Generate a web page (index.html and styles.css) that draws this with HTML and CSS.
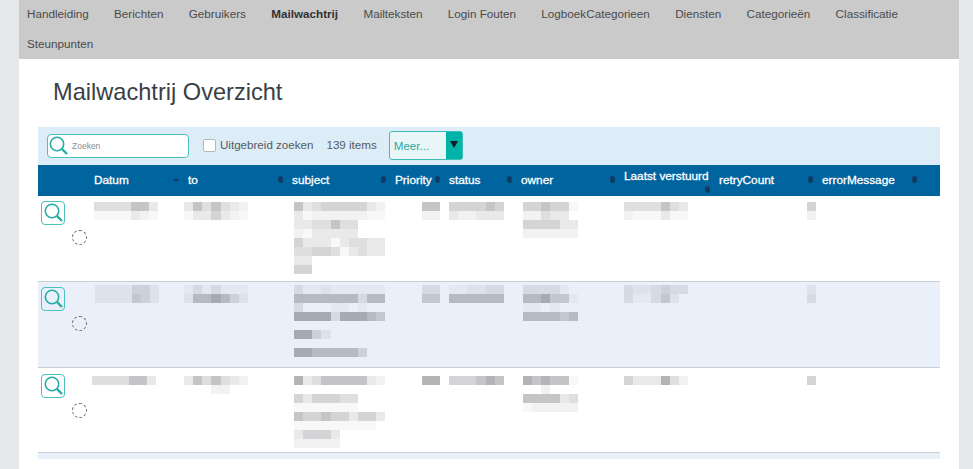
FILE: index.html
```html
<!DOCTYPE html>
<html lang="nl">
<head>
  <meta charset="UTF-8" />
  <meta name="viewport" content="width=device-width, initial-scale=1" />
  <title>Mailwachtrij Overzicht</title>
  <link rel="stylesheet" href="styles.css">
</head>
<body>
  <div class="page">
    <nav class="topnav">
      <a href="#">Handleiding</a>
      <a href="#">Berichten</a>
      <a href="#">Gebruikers</a>
      <a href="#" class="active">Mailwachtrij</a>
      <a href="#">Mailteksten</a>
      <a href="#">Login Fouten</a>
      <a href="#">LogboekCategorieen</a>
      <a href="#">Diensten</a>
      <a href="#">Categorieën</a>
      <a href="#">Classificatie</a>
      <a href="#">Steunpunten</a>
    </nav>

    <h1 class="title">Mailwachtrij Overzicht</h1>

    <section class="overview">
      <div class="toolbar">
        <div class="search">
          <svg class="loupe" viewBox="0 0 20 20"><circle cx="8" cy="8" r="6.7"/><line class="grip" x1="12.9" y1="12.9" x2="18" y2="18"/></svg>
          <input type="text" placeholder="Zoeken">
        </div>
        <label class="extended"><input type="checkbox"> Uitgebreid zoeken</label>
        <span class="count">139 items</span>
        <div class="more"><span>Meer...</span><b class="more-btn"><s></s></b></div>
      </div>

      <table class="grid">
        <colgroup>
          <col class="c-act"><col class="c-datum"><col class="c-to"><col class="c-subject"><col class="c-prio">
          <col class="c-status"><col class="c-owner"><col class="c-last"><col class="c-retry"><col class="c-error">
        </colgroup>
        <thead>
          <tr>
            <th></th>
            <th><div class="th">Datum<span class="sort desc"></span></div></th>
            <th><div class="th">to<span class="sort"></span></div></th>
            <th><div class="th">subject<span class="sort"></span></div></th>
            <th><div class="th">Priority<span class="sort"></span></div></th>
            <th><div class="th">status<span class="sort"></span></div></th>
            <th><div class="th">owner<span class="sort"></span></div></th>
            <th><div class="th wrap">Laatst verstuurd<span class="sort"></span></div></th>
            <th><div class="th">retryCount<span class="sort"></span></div></th>
            <th><div class="th last">errorMessage<span class="sort"></span></div></th>
          </tr>
        </thead>
        <tbody>
          <!-- contents of the rows are pixelated in the original -->
          <tr class="row r1">
            <td class="act">
              <button class="view"><svg class="loupe" viewBox="0 0 20 20"><circle cx="8" cy="8" r="6.7"/><line class="grip" x1="12.9" y1="12.9" x2="18" y2="18"/></svg></button>
              <span class="busy"></span>
            </td>
            <td><div class="mos">
              <p><i class="d"></i><i class="d"></i><i class="d"></i><i class="d"></i><i class="f"></i><i class="f"></i><i class="c"></i></p>
              <p><i class="a"></i><i class="a"></i><i class="a"></i><i class="a"></i><i class="c"></i><i class="b"></i><i class="a"></i></p>
            </div></td>
            <td><div class="mos m-to">
              <p><i class="c"></i><i class="f"></i><i class="d"></i><i class="f"></i><i class="d"></i><i class="c"></i><i class="b"></i></p>
              <p><i class="a"></i><i class="c"></i><i class="c"></i><i class="e"></i><i class="c"></i><i class="b"></i><i class="a"></i></p>
            </div></td>
            <td><div class="mos m-subject">
              <p><i class="f"></i><i class="c"></i><i class="d"></i><i class="e"></i><i class="e"></i><i class="e"></i><i class="e"></i><i class="e"></i><i class="c"></i><i class="b"></i></p>
              <p><i class="c"></i><i class="a"></i><i class="b"></i><i class="b"></i><i class="b"></i><i class="b"></i><i class="b"></i><i class="b"></i><i class="a"></i><i class="a"></i></p>
              <p><i class="c"></i><i class="c"></i><i class="d"></i><i class="d"></i><i class="f"></i><i class="d"></i><i class="d"></i></p>
              <p><i class="b"></i><i class="a"></i><i class="c"></i><i class="c"></i><i class="c"></i><i class="c"></i><i class="c"></i></p>
              <p><i class="e"></i><i class="c"></i><i class="c"></i><i class="c"></i><i class="a"></i><i class="c"></i><i class="d"></i><i class="d"></i><i class="c"></i><i class="c"></i></p>
              <p><i class="d"></i><i class="d"></i><i class="e"></i><i class="e"></i><i class="d"></i><i class="a"></i><i class="c"></i><i class="d"></i><i class="c"></i><i class="c"></i></p>
              <p><i class="c"></i><i class="c"></i></p>
              <p><i class="e"></i><i class="e"></i></p>
            </div></td>
            <td><div class="mos m-prio">
              <p><i class="f"></i><i class="f"></i></p>
              <p><i class="b"></i><i class="b"></i></p>
            </div></td>
            <td><div class="mos m-col">
              <p><i class="e"></i><i class="e"></i><i class="e"></i><i class="e"></i><i class="f"></i><i class="e"></i></p>
              <p><i class="c"></i><i class="b"></i><i class="b"></i><i class="c"></i><i class="c"></i><i class="c"></i></p>
            </div></td>
            <td><div class="mos m-subject">
              <p><i class="e"></i><i class="e"></i><i class="f"></i><i class="e"></i><i class="e"></i><i class="a"></i></p>
              <p><i class="b"></i><i class="b"></i><i class="d"></i><i class="c"></i><i class="c"></i></p>
              <p><i class="e"></i><i class="e"></i><i class="e"></i><i class="e"></i><i class="c"></i><i class="c"></i></p>
              <p><i class="b"></i><i class="b"></i><i class="b"></i><i class="b"></i><i class="b"></i><i class="b"></i></p>
            </div></td>
            <td><div class="mos m-col">
              <p><i class="d"></i><i class="d"></i><i class="d"></i><i class="d"></i><i class="f"></i><i class="d"></i><i class="c"></i></p>
              <p><i class="b"></i><i class="a"></i><i class="a"></i><i class="a"></i><i class="c"></i><i class="a"></i><i class="a"></i></p>
            </div></td>
            <td><div class="mos m-err">
              <p><i class="e"></i></p>
              <p><i class="b"></i></p>
            </div></td>
            <td></td>
          </tr>
          <tr class="row r2 alt">
            <td class="act">
              <button class="view"><svg class="loupe" viewBox="0 0 20 20"><circle cx="8" cy="8" r="6.7"/><line class="grip" x1="12.9" y1="12.9" x2="18" y2="18"/></svg></button>
              <span class="busy"></span>
            </td>
            <td><div class="mos m-date2">
              <p><i class="b"></i><i class="b"></i><i class="b"></i><i class="b"></i><i class="d"></i><i class="d"></i><i class="b"></i></p>
              <p><i class="b"></i><i class="b"></i><i class="b"></i><i class="b"></i><i class="e"></i><i class="d"></i><i class="b"></i></p>
            </div></td>
            <td><div class="mos m-to">
              <p><i class="a"></i><i class="c"></i><i class="a"></i><i class="c"></i><i class="a"></i><i class="a"></i><i class="a"></i></p>
              <p><i class="b"></i><i class="f"></i><i class="f"></i><i class="g"></i><i class="f"></i><i class="d"></i><i class="b"></i></p>
            </div></td>
            <td><div class="mos m-subject">
              <p><i class="c"></i><i class="a"></i><i class="a"></i><i class="b"></i><i class="a"></i><i class="a"></i><i class="a"></i><i class="a"></i><i class="a"></i><i class="a"></i></p>
              <p><i class="f"></i><i class="f"></i><i class="f"></i><i class="f"></i><i class="f"></i><i class="f"></i><i class="f"></i><i class="c"></i><i class="f"></i><i class="f"></i></p>
              <p><i class="c"></i><i></i><i></i><i></i><i class="a"></i><i class="a"></i><i></i><i class="a"></i></p>
              <p><i class="g"></i><i class="g"></i><i class="g"></i><i class="g"></i><i class="c"></i><i class="g"></i><i class="g"></i><i class="g"></i><i class="f"></i><i class="e"></i></p>
              <p></p>
              <p><i class="g"></i><i class="g"></i><i class="d"></i><i class="b"></i></p>
              <p></p>
              <p><i class="g"></i><i class="g"></i><i class="f"></i><i class="f"></i><i class="f"></i><i class="f"></i><i class="f"></i><i class="d"></i></p>
            </div></td>
            <td><div class="mos m-prio">
              <p><i class="c"></i><i class="c"></i></p>
              <p><i class="e"></i><i class="e"></i></p>
            </div></td>
            <td><div class="mos m-col">
              <p><i class="a"></i><i class="a"></i><i class="b"></i><i class="b"></i><i class="c"></i><i class="c"></i></p>
              <p><i class="f"></i><i class="f"></i><i class="f"></i><i class="f"></i><i class="f"></i><i class="f"></i></p>
            </div></td>
            <td><div class="mos m-subject">
              <p><i class="c"></i><i class="c"></i><i class="c"></i><i class="c"></i><i class="a"></i></p>
              <p><i class="f"></i><i class="f"></i><i class="g"></i><i class="e"></i><i class="e"></i><i class="a"></i></p>
              <p><i class="a"></i><i class="a"></i><i></i><i class="a"></i></p>
              <p><i class="f"></i><i class="f"></i><i class="f"></i><i class="f"></i><i class="e"></i><i class="f"></i></p>
            </div></td>
            <td><div class="mos m-col">
              <p><i class="c"></i><i class="b"></i><i class="b"></i><i class="c"></i><i class="d"></i><i class="c"></i><i class="c"></i></p>
              <p><i class="c"></i><i class="a"></i><i class="a"></i><i class="c"></i><i class="e"></i><i class="b"></i></p>
            </div></td>
            <td><div class="mos m-err">
              <p><i class="b"></i></p>
              <p><i class="c"></i></p>
            </div></td>
            <td></td>
          </tr>
          <tr class="row r3">
            <td class="act">
              <button class="view"><svg class="loupe" viewBox="0 0 20 20"><circle cx="8" cy="8" r="6.7"/><line class="grip" x1="12.9" y1="12.9" x2="18" y2="18"/></svg></button>
              <span class="busy"></span>
            </td>
            <td><div class="mos m-date3">
              <p><i class="d"></i><i class="d"></i><i class="d"></i><i class="d"></i><i class="f"></i><i class="f"></i><i class="c"></i></p>
            </div></td>
            <td><div class="mos m-to">
              <p><i class="c"></i><i class="f"></i><i class="d"></i><i class="f"></i><i class="d"></i><i class="c"></i><i class="b"></i></p>
              <p><i></i><i></i><i></i><i class="b"></i><i class="b"></i></p>
            </div></td>
            <td><div class="mos m-subject">
              <p><i class="g"></i><i class="c"></i><i class="d"></i><i class="f"></i><i class="f"></i><i class="f"></i><i class="f"></i><i class="f"></i><i class="c"></i><i class="b"></i></p>
              <p></p>
              <p><i class="e"></i><i class="c"></i><i class="e"></i><i class="e"></i><i class="e"></i><i class="d"></i><i class="d"></i></p>
              <p><i class="a"></i><i class="a"></i><i class="a"></i><i class="a"></i><i class="a"></i><i class="a"></i><i class="a"></i></p>
              <p><i class="f"></i><i class="e"></i><i class="e"></i><i class="f"></i><i class="e"></i><i class="e"></i><i class="c"></i><i class="e"></i><i class="e"></i><i class="c"></i></p>
              <p><i class="a"></i><i class="a"></i><i class="a"></i><i class="a"></i><i class="a"></i><i class="a"></i><i class="a"></i><i class="a"></i><i class="a"></i></p>
              <p><i class="c"></i><i class="e"></i><i class="e"></i><i class="e"></i><i class="c"></i></p>
              <p><i class="b"></i><i class="b"></i><i class="b"></i><i class="b"></i><i class="b"></i></p>
            </div></td>
            <td><div class="mos m-prio">
              <p><i class="g"></i><i class="g"></i></p>
            </div></td>
            <td><div class="mos m-col">
              <p><i class="e"></i><i class="e"></i><i class="e"></i><i class="f"></i><i class="g"></i><i class="f"></i></p>
            </div></td>
            <td><div class="mos m-subject">
              <p><i class="g"></i><i class="f"></i><i class="g"></i><i class="f"></i><i class="f"></i><i class="a"></i></p>
              <p><i></i><i></i><i class="b"></i></p>
              <p><i class="f"></i><i class="f"></i><i class="f"></i><i class="f"></i><i class="c"></i><i class="d"></i></p>
              <p><i class="a"></i><i class="b"></i><i class="b"></i><i class="b"></i><i class="b"></i><i class="b"></i></p>
            </div></td>
            <td><div class="mos m-col">
              <p><i class="e"></i><i class="c"></i><i class="c"></i><i class="c"></i><i class="g"></i><i class="d"></i><i class="b"></i></p>
            </div></td>
            <td><div class="mos m-err">
              <p><i class="e"></i></p>
            </div></td>
            <td></td>
          </tr>
          <tr class="row r4 alt"><td colspan="10"></td></tr>
        </tbody>
      </table>
    </section>
  </div>
</body>
</html>
```

FILE: styles.css
```css
/* Global Styles */
html, body {
  margin: 0;
  padding: 0;
  height: 100%;
  overflow: hidden;
  background-color: #e6e8ea;
  font-family: "Liberation Sans", Arial, sans-serif;
  font-size: 12px;
  color: #4a4d52;
}

.page {
  margin: 0 14px 0 19px;
  height: 100%;
  background: #fff;
}

/* Top menu */
.topnav {
  display: flex;
  flex-wrap: wrap;
  column-gap: 25.3px;
  row-gap: 1.5px;
  height: 59px;
  padding-left: 8px;
  background: #cacaca;
  align-content: flex-start;
}

.topnav a {
  font-size: 11.7px;
  line-height: 28px;
  color: #4b4b4b;
  text-decoration: none;
}

.topnav a.active {
  font-weight: bold;
  color: #333;
}

.title {
  margin: 19px 0 21px 34px;
  font-size: 23.6px;
  line-height: 28px;
  font-weight: normal;
  color: #3a3f45;
}

.overview {
  margin: 0 0 0 19px;
  width: 902px;
}

/* Search bar above the table */
.toolbar {
  display: flex;
  align-items: center;
  height: 38px;
  padding-left: 9px;
  background: #dcedf7;
  color: #555a60;
  font-size: 11.6px;
}

.search {
  display: flex;
  align-items: center;
  box-sizing: border-box;
  width: 142px;
  height: 24px;
  padding-left: 1px;
  background: #fff;
  border: 1px solid #4cc0bb;
  border-radius: 4px;
}

.search input {
  flex: 1;
  min-width: 0;
  margin-left: 3px;
  padding: 0;
  border: 0;
  outline: 0;
  font: 8.5px "Liberation Sans", Arial, sans-serif;
}

.search input::placeholder {
  color: #8a8d90;
}

.loupe {
  width: 20px;
  height: 20px;
  fill: none;
  stroke: #26aea5;
  stroke-width: 1.6;
}

.loupe .grip {
  stroke-width: 2.4;
}

.extended {
  display: flex;
  align-items: center;
  gap: 4px;
  margin: 0 0 3px 14px;
}

.extended input {
  appearance: none;
  box-sizing: border-box;
  width: 13px;
  height: 13px;
  margin: 2px 0 0;
  background: #fff;
  border: 1px solid #b5b8bb;
  border-radius: 2px;
}

.count {
  margin: 0 0 3px 13px;
}

.more {
  display: flex;
  align-items: center;
  justify-content: space-between;
  box-sizing: border-box;
  width: 74px;
  height: 29px;
  margin-left: 12px;
  margin-top: -1px;
  padding-left: 4px;
  background: #e9f6f8;
  border: 1px solid #3dbdb6;
  border-radius: 3px;
  color: #2aa9a5;
}

.more-btn {
  display: flex;
  justify-content: center;
  width: 16px;
  align-self: stretch;
  padding-top: 9px;
  box-sizing: border-box;
  background: #00b3a8;
}

.more-btn s {
  width: 0;
  height: 0;
  border-left: 4px solid transparent;
  border-right: 4px solid transparent;
  border-top: 7px solid #0c1c24;
}

/* Table */
.grid {
  width: 902px;
  table-layout: fixed;
  border-collapse: collapse;
}

.c-act { width: 52px; }
.c-datum { width: 94px; }
.c-to { width: 104px; }
.c-subject { width: 103px; }
.c-prio { width: 54px; }
.c-status { width: 72px; }
.c-owner { width: 103px; }
.c-last { width: 95px; }
.c-retry { width: 103px; }
.c-error { width: 122px; }

.grid th {
  height: 31px;
  padding: 0;
  background: #00649f;
  font-weight: normal;
  text-align: left;
  color: #fff;
}

.th {
  display: flex;
  align-items: center;
  justify-content: space-between;
  padding: 0 5px 2px 4px;
  font-size: 11.8px;
  line-height: 14px;
  -webkit-text-stroke: 0.3px #fff;
}

.th.wrap {
  flex-wrap: wrap;
  white-space: nowrap;
  padding-bottom: 0;
}

.th.wrap .sort {
  margin-top: 3px;
}

.th.last {
  padding-right: 23px;
}

/* the up and down carets melt together at this size */
.sort {
  width: 5px;
  height: 7px;
  margin-left: auto;
  border-radius: 50%;
  background: #123a63;
}

.sort.desc {
  width: 0;
  height: 0;
  border-radius: 0;
  background: none;
  border-left: 3px solid transparent;
  border-right: 3px solid transparent;
  border-top: 3px solid #123a63;
  margin-top: 2px;
}

.grid td {
  padding: 0;
  vertical-align: top;
}

.row td {
  border-bottom: 1px solid #c9ced6;
}

.r1 td { height: 85px; }
.r2 td { height: 85px; }
.r3 td { height: 84px; }
.r4 td { height: 6px; border-bottom: 0; }

.alt td {
  background: #e9f0f9;
}

.view {
  display: block;
  box-sizing: border-box;
  width: 24px;
  height: 24px;
  margin-left: 3px;
  padding: 1px 0 0 1px;
  background: #fff;
  border: 1px solid #4cc0bb;
  border-radius: 4px;
}

.alt .view {
  background: #e9f0f9;
}

.busy {
  display: block;
  box-sizing: border-box;
  width: 15px;
  height: 15px;
  margin: 5px 0 0 34px;
  border: 1px dashed #666;
  border-radius: 50%;
}

.r1 .view { margin-top: 5px; }
.r2 .view { margin-top: 5px; }
.r3 .view { margin-top: 6px; }

/* Pixelated cell contents */
.mos {
  margin-left: 4px;
  filter: blur(0.5px);
}

.r1 .mos { margin-top: 6px; }
.r2 .mos { margin-top: 3px; }
.r3 .mos { margin-top: 8px; }

.mos p {
  display: flex;
  height: 9px;
  margin: 0;
}

.mos i {
  flex: none;
  width: 9.15px;
  height: 9px;
}

.m-date2 { margin-left: 5px; }
.m-date3 { margin-left: 2px; }
.m-to { margin-left: 0; }
.m-subject { margin-left: 6px; }
.m-prio { margin-left: 31px; }
.m-col { margin-left: 4px; }
.m-err { margin-left: 92px; }

.a { background: rgba(40, 40, 50, 0.03); }
.b { background: rgba(40, 40, 50, 0.06); }
.c { background: rgba(40, 40, 50, 0.1); }
.d { background: rgba(40, 40, 50, 0.15); }
.e { background: rgba(40, 40, 50, 0.2); }
.f { background: rgba(40, 40, 50, 0.27); }
.g { background: rgba(40, 40, 50, 0.35); }
```
